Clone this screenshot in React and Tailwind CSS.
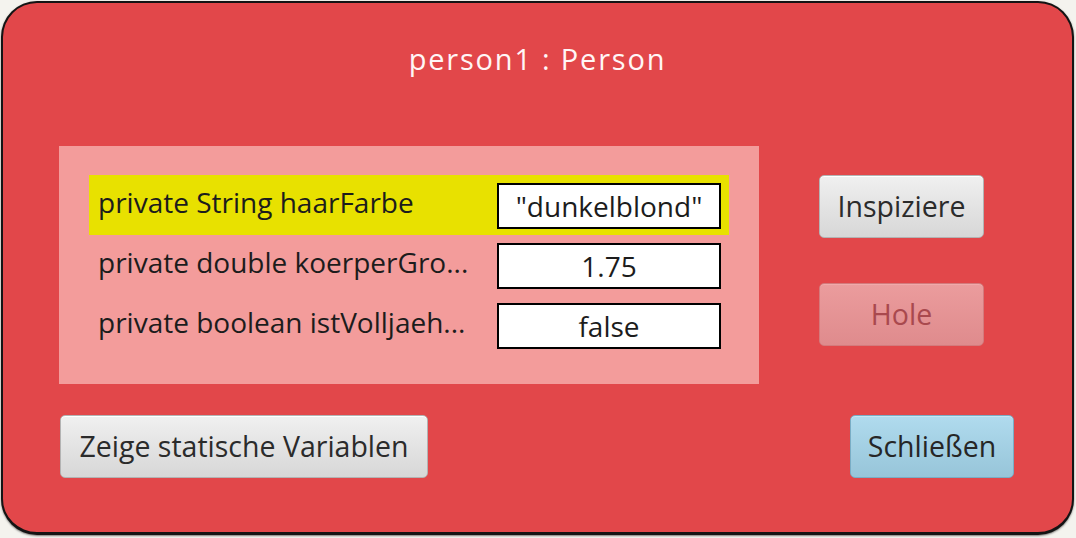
const fields = [
  { label: 'private String haarFarbe', value: '"dunkelblond"', selected: true },
  { label: 'private double koerperGro...', value: '1.75' },
  { label: 'private boolean istVolljaeh...', value: 'false' },
]

function Button({ children, variant = 'default', className = '' }) {
  const styles = {
    default: 'border-[#b3b3b3] bg-linear-to-b from-[#f0f0f0] to-[#d7d7d7] text-[#2b2b2b] shadow-[inset_0_1px_0_#ffffff]',
    disabled: 'border-[#d47a7c] bg-linear-to-b from-[#eb9c9d] to-[#df8b8d] text-[#a9494e] shadow-[inset_0_1px_0_#f0a9aa]',
    primary: 'border-[#79adc5] bg-linear-to-b from-[#b0dbee] to-[#97c5d9] text-[#262626] shadow-[inset_0_1px_0_#c6e6f4]',
  }
  return (
    <div className={`flex h-[63px] items-center justify-center rounded-[5px] border text-[28.5px] leading-none ${styles[variant]} ${className}`}>
      {children}
    </div>
  )
}

export default function App() {
  return (
    <div className="h-[538px] w-[1076px] overflow-hidden bg-[#f4f3ee] pl-[1px] pt-[1px] font-['Open_Sans',sans-serif]">
      <div className="flex h-[534px] w-[1073px] flex-col rounded-[36px] border-2 border-b-[3px] border-[#141414] bg-[#e2474a] px-[56px] shadow-[0_1px_2px_rgba(0,0,0,0.5)]">
        <div className="mt-[36px] text-center text-[29px] leading-[40px] tracking-[1.8px] text-[#fff6f6]">
          person1 : Person
        </div>

        <div className="mt-[67px] flex items-start gap-[60px]">
          <div className="w-[700px] bg-[#f39c9b] px-[30px] pb-[29px] pt-[29px]">
            {fields.map(f => (
              <div key={f.label} className={`flex h-[60px] items-start ${f.selected ? 'bg-[#e8e100]' : ''}`}>
                <div className="flex h-full w-[408px] items-center pb-[7px] pl-[9px] text-[28px] leading-[38px] text-[#1c1c1c] whitespace-nowrap">
                  {f.label}
                </div>
                <div className="mt-[8px] flex h-[46px] w-[224px] items-center justify-center border-2 border-black bg-white text-[28px] leading-[38px] text-[#1c1c1c]">
                  {f.value}
                </div>
              </div>
            ))}
          </div>

          <div className="flex flex-col gap-[45px] pt-[29px]">
            <Button className="w-[165px]">Inspiziere</Button>
            <Button variant="disabled" className="w-[165px]">Hole</Button>
          </div>
        </div>

        <div className="mt-[31px] flex items-start justify-between pl-[1px] pr-[2px]">
          <Button className="w-[368px]">Zeige statische Variablen</Button>
          <Button variant="primary" className="w-[164px] h-[62px]">Schließen</Button>
        </div>
      </div>
    </div>
  )
}
